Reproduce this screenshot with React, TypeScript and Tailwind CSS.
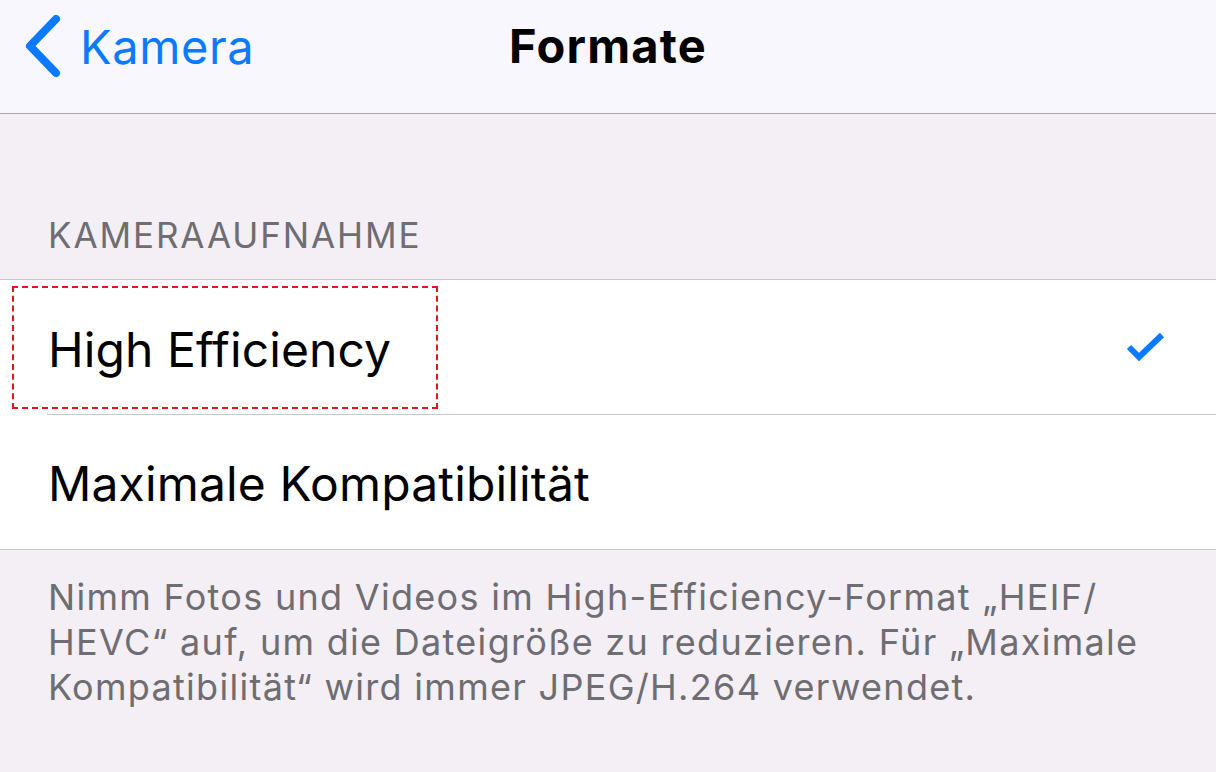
import React from 'react';

const CheckIcon: React.FC = () => (
  <svg width="40" height="32" viewBox="0 0 40 32" fill="none">
    <path d="M3 16 L13 26 L36 4" stroke="#0a7aff" strokeWidth="6" strokeLinecap="butt" strokeLinejoin="miter" />
  </svg>
);

const BackChevron: React.FC = () => (
  <svg width="40" height="64" viewBox="0 0 40 64" fill="none">
    <path d="M33 4 L7 31 L33 58" stroke="#0a7aff" strokeWidth="8" strokeLinecap="round" strokeLinejoin="round" />
  </svg>
);

const App: React.FC = () => {
  return (
    <div className="w-[1216px] h-[772px] overflow-hidden bg-[#f4eef5] font-['Inter','Noto_Sans',sans-serif]">
      {/* nav bar */}
      <div className="h-[114px] bg-[#f7f7fd] border-b border-[#a9a9ab] relative flex items-start">
        <div className="flex items-center pl-[23px] pt-[15px] gap-[17px]">
          <BackChevron />
          <span className="text-[#0a7aff] text-[47px] leading-none tracking-[0.6px] -mt-[1px]">Kamera</span>
        </div>
        <div className="absolute left-0 right-0 top-[22px] text-center">
          <span className="text-black text-[47px] font-bold leading-none tracking-[1.2px]">Formate</span>
        </div>
      </div>

      {/* section header */}
      <div className="h-[165px] flex items-end pl-[48px] pb-[26px]">
        <span className="text-[#6d6d72] text-[35px] leading-none tracking-[1.9px]">KAMERAAUFNAHME</span>
      </div>

      {/* list */}
      <div className="bg-white border-t border-b border-[#c8c7cc]">
        <div className="h-[134px] relative flex items-center justify-between pl-[48px] pr-[50px]">
          <div className="absolute left-[12px] top-[6px] w-[426px] h-[123px] border-2 border-dashed border-[#e5131d]" />
          <span className="text-black text-[48px] leading-none tracking-[0.1px] mt-[5px]">High Efficiency</span>
          <CheckIcon />
        </div>
        <div className="ml-[47px] h-px bg-[#c8c7cc]" />
        <div className="h-[134px] flex items-center pl-[48px]">
          <span className="text-black text-[48px] leading-none tracking-[0.15px] mt-[3px]">Maximale Kompatibilität</span>
        </div>
      </div>

      {/* footer */}
      <div className="pl-[48px] pr-[20px] pt-[25px]">
        <p className="text-[#6d6d72] text-[36px] leading-[45px] tracking-[1.3px]">
          Nimm Fotos und Videos im High-Efficiency-Format „HEIF/
          <br />
          HEVC“ auf, um die Dateigröße zu reduzieren. Für „Maximale
          <br />
          Kompatibilität“ wird immer JPEG/H.264 verwendet.
        </p>
      </div>
    </div>
  );
};

export default App;
